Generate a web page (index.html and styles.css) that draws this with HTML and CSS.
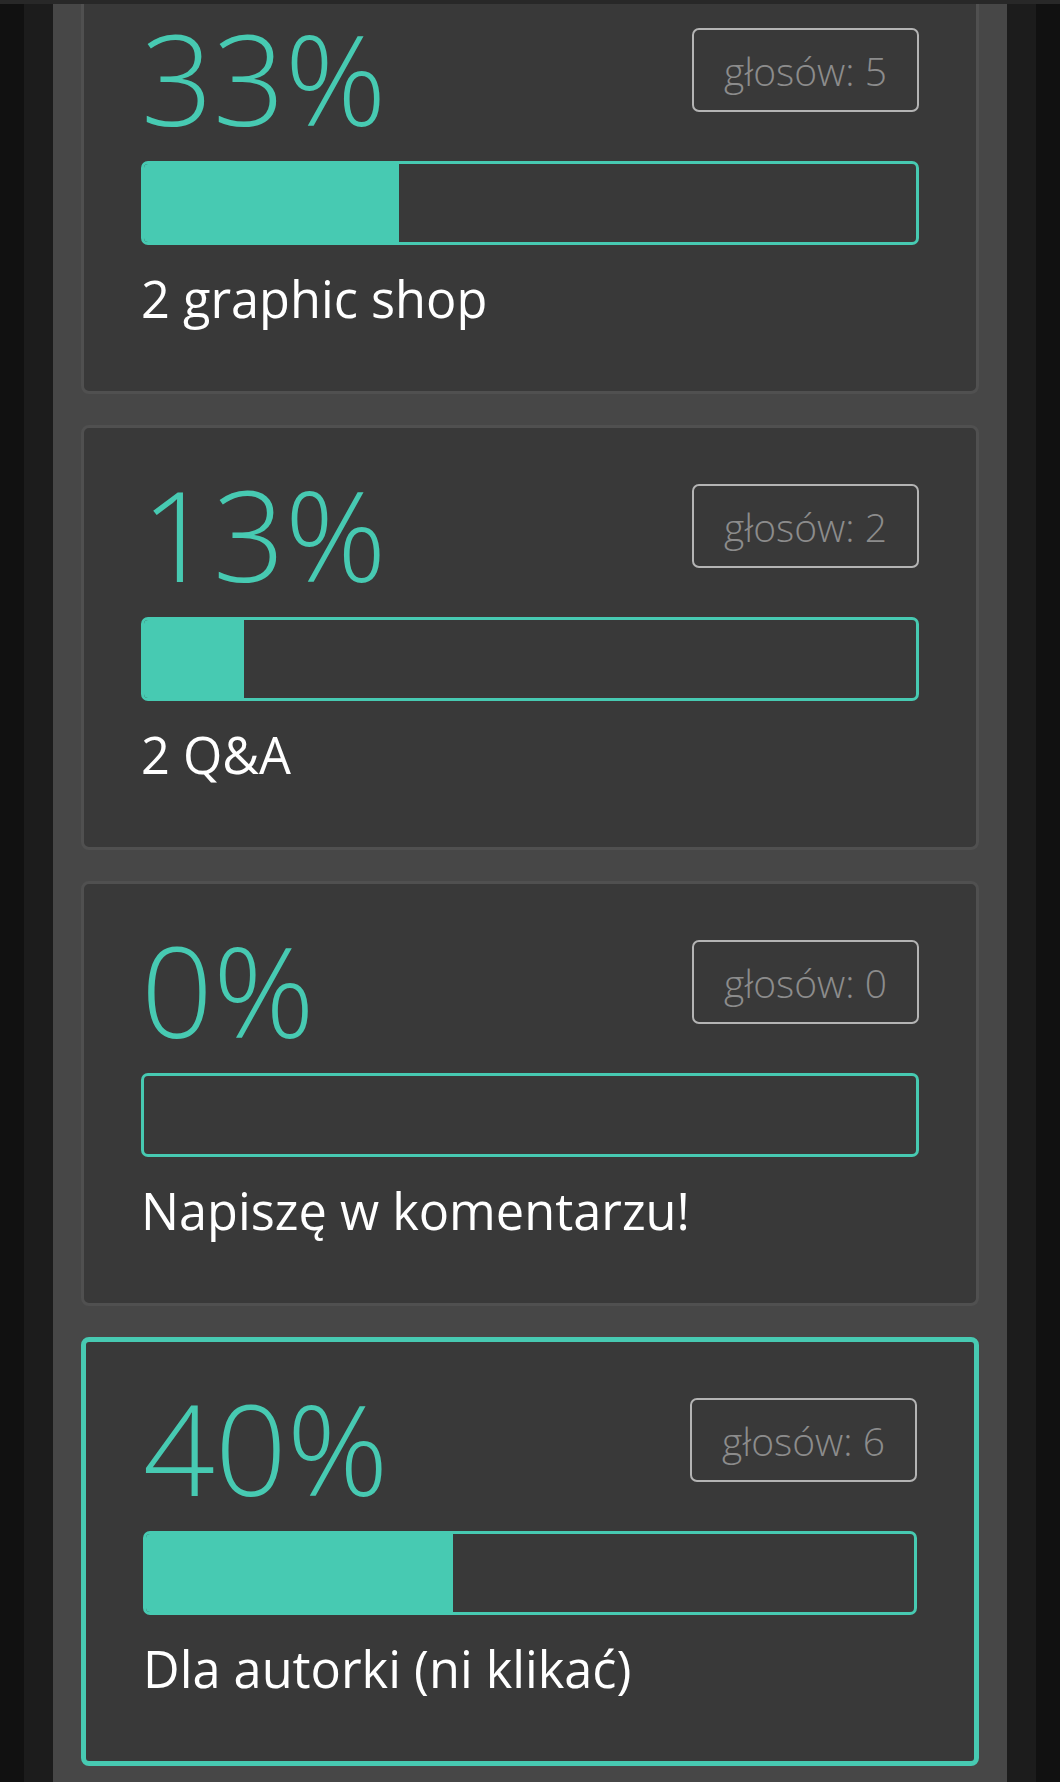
FILE: index.html
```html
<!DOCTYPE html>
<html lang="pl">
<head>
<meta charset="utf-8">
<title>Ankieta</title>
<link rel="stylesheet" href="styles.css">
</head>
<body>
<div class="topbar"></div>
<div class="page">
  <div class="rail">
    <div class="panel">
      <div class="list">
        <div class="card">
          <div class="head">
            <div class="pct">33%</div>
            <div class="votes">głosów: 5</div>
          </div>
          <div class="bar"><div class="fill" style="width:33%"></div></div>
          <div class="label">2 graphic shop</div>
        </div>
        <div class="card">
          <div class="head">
            <div class="pct">13%</div>
            <div class="votes">głosów: 2</div>
          </div>
          <div class="bar"><div class="fill" style="width:13%"></div></div>
          <div class="label">2 Q&amp;A</div>
        </div>
        <div class="card">
          <div class="head">
            <div class="pct">0%</div>
            <div class="votes">głosów: 0</div>
          </div>
          <div class="bar"><div class="fill" style="width:0%"></div></div>
          <div class="label">Napiszę w komentarzu!</div>
        </div>
        <div class="card card-selected">
          <div class="head">
            <div class="pct">40%</div>
            <div class="votes">głosów: 6</div>
          </div>
          <div class="bar"><div class="fill" style="width:40%"></div></div>
          <div class="label">Dla autorki (ni klikać)</div>
        </div>
      </div>
    </div>
  </div>
</div>
</body>
</html>
```

FILE: styles.css
```css
html, body {
  margin: 0;
  padding: 0;
}
body {
  background: #111111;
  font-family: "Open Sans", "Liberation Sans", sans-serif;
  overflow: hidden;
}
.topbar {
  position: fixed;
  top: 0;
  left: 0;
  right: 0;
  height: 4px;
  background: #282828;
  z-index: 10;
}
.page {
  padding: 0 24px;
}
.rail {
  background: #1c1c1c;
  padding: 0 29px;
}
.panel {
  background: #474747;
  padding: 0 28px 40px;
  min-height: 1782px;
  box-sizing: border-box;
}
.list {
  display: flex;
  flex-direction: column;
  gap: 31px;
  margin-top: -31px;
}
.card {
  background: #393939;
  border: 3px solid #505050;
  border-radius: 8px;
  padding: 56px 57px 57px;
}
.card-selected {
  border: 5px solid #47cab2;
}
.head {
  display: flex;
  justify-content: space-between;
  align-items: flex-start;
}
.pct {
  font-size: 126px;
  font-weight: 300;
  line-height: 98px;
  height: 98px;
  color: #47cab2;
}
.votes {
  box-sizing: border-box;
  height: 84px;
  width: 227px;
  border: 2px solid #b4b4b4;
  border-radius: 7px;
  display: flex;
  align-items: center;
  justify-content: center;
  font-size: 39px;
  font-weight: 300;
  color: #8c8c8c;
}
.bar {
  margin-top: 35px;
  height: 84px;
  box-sizing: border-box;
  border: 3px solid #47cab2;
  border-radius: 7px;
  overflow: hidden;
  background: #393939;
}
.fill {
  height: 100%;
  background: #47cab2;
}
.label {
  margin-top: 18px;
  font-size: 50.5px;
  font-weight: 400;
  line-height: 71px;
  color: #ffffff;
}
```
